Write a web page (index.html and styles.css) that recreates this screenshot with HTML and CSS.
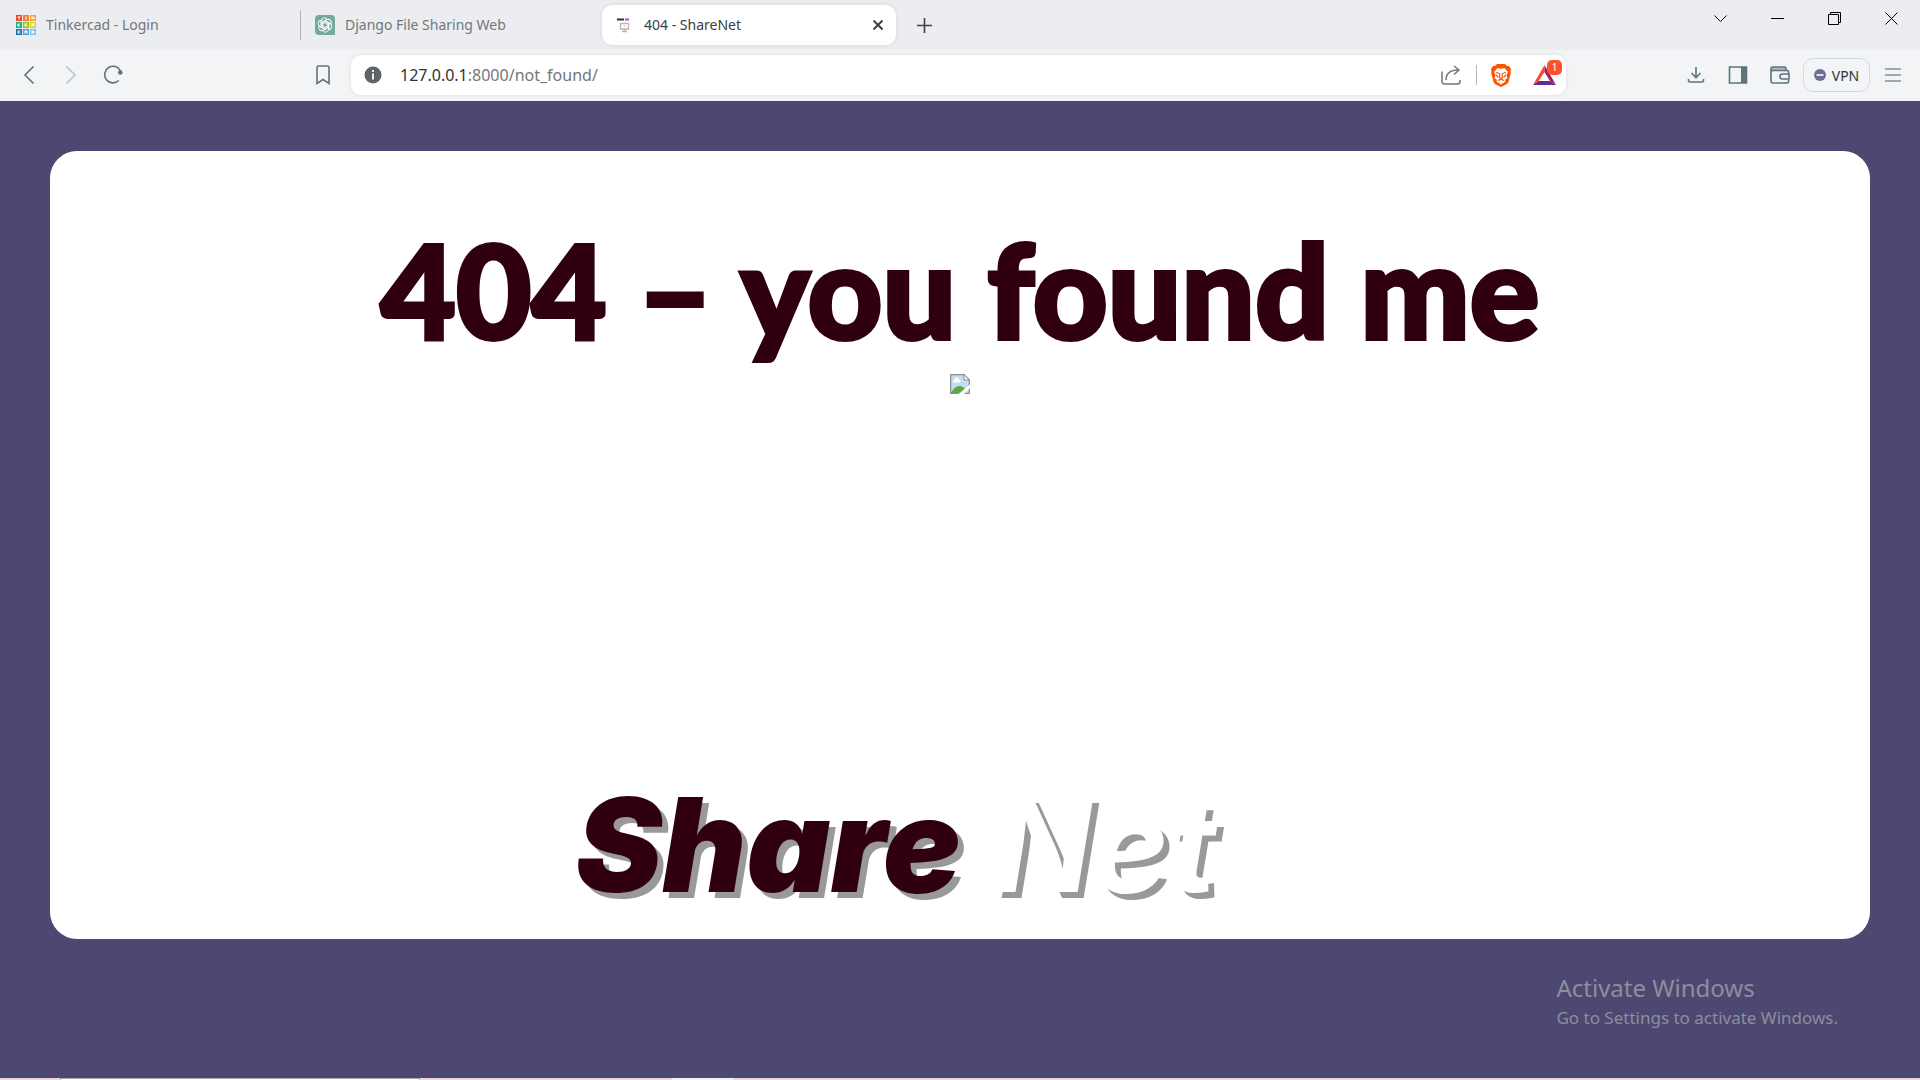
FILE: index.html
```html
<!DOCTYPE html>
<html lang="en">
<head>
<meta charset="utf-8">
<title>404 - ShareNet</title>
<link rel="stylesheet" href="styles.css">
</head>
<body>
<div class="browser">
  <header class="tabstrip">
    <nav class="tabs" aria-label="Tabs">
      <button class="tab divided">
        <svg class="favicon" viewBox="0 0 20 20" width="20" height="20" aria-hidden="true">
          <path fill="#f0452b" d="M0 0h6v6H0z"/><path fill="#f57b3a" d="M7 0h6v6H7z"/><path fill="#f9a13a" d="M14 0h6v6h-6z"/>
          <path fill="#1fb07a" d="M0 7h6v6H0z"/><path fill="#8cc90e" d="M7 7h6v6H7z"/><path fill="#e0d32c" d="M14 7h6v6h-6z"/>
          <path fill="#0b6fb8" d="M0 14h6v6H0z"/><path fill="#4aa0dc" d="M7 14h6v6H7z"/><path fill="#7cc3e6" d="M14 14h6v6h-6z"/>
          <g fill="#fff"><path d="M1.500 1.500h3v1h-1v2h-1v-2h-1zM9.500 1.500h1v3h-1zM15.500 1.500h1l1 1.500V1.500h1v3h-1l-1-1.500v1.500h-1zM1.500 8.500h1v1l1-1h1L3 10l1.500 1.500h-1l-1-1v1h-1zM8.500 8.500h3v1h-2v1h2v1h-3zM15.500 8.500h3v2l-.5.3.5.7h-1l-1-1v1h-1zM1.500 15.500h3v1h-2v1h2v1h-3zM8.500 15.500h3v3h-1v-1h-1v1h-1zM15.500 15.500h2l1 1v1l-1 1h-2z"/></g>
        </svg>
        <span>Tinkercad - Login</span>
      </button>
      <button class="tab">
        <svg class="favicon" viewBox="0 0 20 20" width="20" height="20" aria-hidden="true">
          <path fill="#74aa9c" d="M4 0h12a4 4 0 0 1 4 4v16H4a4 4 0 0 1-4-4V4a4 4 0 0 1 4-4z"/>
          <g fill="none" stroke="#fff" stroke-width=".9">
            <path id="petal" d="M6.300 12V6.200a3.200 3.200 0 0 1 5.800-2L7.800 6.700v4.800"/>
            <use href="#petal" transform="rotate(60 10 10)"/><use href="#petal" transform="rotate(120 10 10)"/>
            <use href="#petal" transform="rotate(180 10 10)"/><use href="#petal" transform="rotate(240 10 10)"/>
            <use href="#petal" transform="rotate(300 10 10)"/>
          </g>
        </svg>
        <span>Django File Sharing Web</span>
      </button>
      <div class="tab active">
        <svg class="favicon" viewBox="0 0 20 20" width="20" height="20" aria-hidden="true">
          <path fill="#33283c" d="M3 3.500h7v2H3z"/><path fill="#8a5bea" d="M11 3.500h4v2h-4z"/>
          <path fill="none" stroke="#c4b2ab" stroke-width="1.300" d="M6.500 8.500h8v5.500h-8zM10.500 14v2M8 16.500h5"/><path stroke="#c4b2ab" d="M9.500 11h2"/>
        </svg>
        <span class="tab-title">404 - ShareNet</span>
        <button class="tab-close" aria-label="Close tab">
          <svg viewBox="0 0 10 10" width="10" height="10"><path stroke="#3c4043" stroke-width="2" d="M.5.5l9 9M9.500.5l-9 9"/></svg>
        </button>
      </div>
      <button class="new-tab" aria-label="New tab">
        <svg viewBox="0 0 15 15" width="15" height="15"><path stroke="#3c4043" stroke-width="1.600" d="M0 7.500h15M7.500 0v15"/></svg>
      </button>
    </nav>
    <div class="window-controls">
      <button aria-label="Search tabs"><svg viewBox="0 0 13 13" width="13" height="13"><path d="M.5 3.500l6 6 6-6"/></svg></button>
      <button aria-label="Minimize"><svg viewBox="0 0 13 13" width="13" height="13"><path d="M0 6.500h13"/></svg></button>
      <button aria-label="Restore"><svg viewBox="0 0 13 13" width="13" height="13"><path d="M.5 2.500h10v10H.5zM2.500 2.500v-2h10v10h-2"/></svg></button>
      <button aria-label="Close"><svg viewBox="0 0 13 13" width="13" height="13"><path d="M.5.5l12 12M12.500.5l-12 12"/></svg></button>
    </div>
  </header>

  <div class="toolbar">
    <div class="nav-buttons">
      <button aria-label="Back"><svg viewBox="0 0 20 20" width="20" height="20"><path stroke="#5f737d" d="M14.500 1.500L6 10l8.500 8.500"/></svg></button>
      <button aria-label="Forward"><svg viewBox="0 0 20 20" width="20" height="20"><path stroke="#b9c3ca" d="M5.500 1.500L14 10l-8.500 8.500"/></svg></button>
      <button aria-label="Reload"><svg viewBox="0 0 20 20" width="20" height="20"><path stroke="#5f737d" d="M15.800 15.500A8.300 8.300 0 1 1 17.500 6"/><circle cx="17.300" cy="7.500" r="2.300" fill="#5f737d"/></svg></button>
    </div>
    <button class="bookmark" aria-label="Bookmark this page"><svg viewBox="0 0 16 20" width="16" height="20"><path stroke="#5f737d" d="M3.500 1h9A1.500 1.500 0 0 1 14 2.500V18.500l-6-4-6 4V2.500A1.500 1.500 0 0 1 3.500 1z"/></svg></button>
    <div class="address-bar">
      <svg viewBox="0 0 18 18" width="18" height="18" aria-hidden="true"><circle cx="9" cy="9" r="8.500" fill="#5f6368"/><path stroke="#fff" stroke-width="1.800" d="M9 4v2M9 7.500v6"/></svg>
      <a class="url" href="#"><span class="host">127.0.0.1</span>:8000/not_found/</a>
      <button class="share" aria-label="Share"><svg viewBox="0 0 20 20" width="20" height="20"><path fill="none" stroke="#70767a" stroke-width="1.500" d="M1 6.500v10A2.500 2.500 0 0 0 3.500 19h13a2.500 2.500 0 0 0 2.500-2.500V15M5 15c0-6 4-10 12.500-10M13 1l5 4-5 4.500"/></svg></button>
      <span class="bar-divider"></span>
      <button aria-label="Brave Shields"><svg viewBox="0 0 20 23" width="20" height="23"><path fill="#ff5200" d="M6 0h8l2 2h2l2 3-.5 2 .3 2-2.300 9-1.500 2-6 3-6-3-1.500-2L.2 9l.3-2L0 5l2-3h2z"/><path fill="#fff" d="M6.500 4L10 4.700 13.500 4l3.500 4-1.500 3 1 3-2.500 2 .5 1.500L10 20.500l-4.500-3L6 16l-2.500-2 1-3L3 8z"/><path fill="none" stroke="#ff5200" stroke-width="1.200" d="M5 8.500l3.500 1M15 8.500l-3.500 1M9 9.500l-.7 4 1.700.8 1.700-.8-.7-4M7 13l-2-2M13 13l2-2M7 16.500l3-1.300 3 1.300"/></svg></button>
      <button class="rewards" aria-label="Brave Rewards"><svg viewBox="0 0 23 20" width="23" height="20"><path fill="#ff4724" d="M11.500 0v7L5.500 16 0 20z"/><path fill="#9e1f63" d="M11.500 0L23 20l-6-4-5.500-9z"/><path fill="#662d91" d="M5.500 16H17l6 4H0z"/></svg><span class="badge">1</span></button>
    </div>
    <div class="actions">
      <button aria-label="Downloads"><svg viewBox="0 0 20 20" width="20" height="20"><path stroke="#5f737d" d="M10 2v10M5.500 8L10 12.500 14.500 8M2.500 14v1.500A1.500 1.500 0 0 0 4 17h12a1.500 1.500 0 0 0 1.500-1.500V14"/></svg></button>
      <button aria-label="Sidebar"><svg viewBox="0 0 20 20" width="20" height="20"><path stroke="#5f737d" d="M1.500 2h17v16h-17z"/><path class="solid" d="M13 2h6v16h-6z"/></svg></button>
      <button aria-label="Wallet"><svg viewBox="0 0 20 20" width="20" height="20"><path class="pale" d="M2 2h13l2 4H2z"/><path stroke="#5f737d" d="M18.500 8.500V7A1.500 1.500 0 0 0 17 5.500H3A1.500 1.500 0 0 1 1 4a2 2 0 0 1 2-2h11.500A1.500 1.500 0 0 1 16 3.500v2M1 4v12a2 2 0 0 0 2 2h14a1.500 1.500 0 0 0 1.500-1.500V15M19 9h-6.500a2.500 2.500 0 0 0 0 5H19z"/></svg></button>
      <button class="vpn"><svg viewBox="0 0 12 12" width="12" height="12" aria-hidden="true"><circle cx="6" cy="6" r="6" fill="#6b7092"/><path stroke="#fff" stroke-width="1.600" d="M2.500 6h7"/></svg>VPN</button>
      <button aria-label="Menu"><svg viewBox="0 0 20 20" width="20" height="20"><path stroke="#7f9099" d="M2 4h16M2 10h16M2 16h16"/></svg></button>
    </div>
  </div>

  <main class="page">
    <section class="card">
      <h1 class="headline">404 – you found me</h1>
      <svg class="broken" viewBox="0 0 20 20" width="20" height="20" role="img" aria-label="Missing picture">
        <path fill="#c8d9f5" d="M.5.5H14l5.500 5.500v13.500H.5z"/>
        <path fill="#fff" d="M4 6.500a2.500 2.500 0 0 1 5-1 1.700 1.700 0 0 1 1 3H3.500a1 1 0 0 1 .5-2z"/>
        <path fill="#57ad3b" d="M1 19c2-4 5-7 8.500-7 3 0 5 2 6 3.500l-3 3.500z"/>
        <path fill="none" stroke="#8d8d8d" stroke-width="1.300" d="M19.400 19.400H.6V.6H14l5.400 5.400z"/>
        <path fill="#fff" stroke="#8d8d8d" d="M14 .6V6h5.400z"/>
        <path fill="#fff" d="M20 10.500V14l-6 6H8.500z"/>
      </svg>
      <p class="brand"><span class="brand-share">Share</span><span class="brand-net">Net</span></p>
    </section>
  </main>

  <footer class="taskbar"><span class="task-search"></span><span class="task-current"></span></footer>

  <aside class="watermark">
    <p class="watermark-title">Activate Windows</p>
    <p class="watermark-text">Go to Settings to activate Windows.</p>
  </aside>
</div>
</body>
</html>
```
FILE: styles.css
```css
* { box-sizing: border-box; }

body {
  margin: 0;
  font-family: "Noto Sans", "Open Sans", sans-serif;
}

p, h1 { margin: 0; }

button {
  display: flex;
  align-items: center;
  justify-content: center;
  padding: 0;
  border: 0;
  background: none;
  font: inherit;
  color: inherit;
}

svg { display: block; flex: none; }

.browser {
  display: flex;
  flex-direction: column;
  min-height: 100vh;
}

/* Tab strip */
.tabstrip {
  display: flex;
  justify-content: space-between;
  height: 50px;
  background: #ebedf1;
}

.tabs { display: flex; align-items: center; }

.tab {
  display: flex;
  align-items: center;
  justify-content: flex-start;
  gap: 10px;
  width: 301px;
  height: 30px;
  padding: 0 14px 0 16px;
  font-size: 14px;
  line-height: 20px;
  color: #73777b;
}

.tab.divided { border-right: 1px solid #b4b6b9; }

.tab:nth-child(2) { padding-left: 14px; }

.tab.active {
  width: 294px;
  height: 40px;
  padding: 0 12px;
  border-radius: 10px;
  background: #fff;
  box-shadow: 0 0 4px #0000001a;
  color: #3c4043;
}

.tab-title { flex: 1; }

.tab-close { width: 12px; height: 20px; }

.new-tab { width: 32px; height: 32px; margin-left: 12px; }

.window-controls { display: flex; height: 37px; }

.window-controls button { width: 57px; }

.window-controls path { fill: none; stroke: #000; }

/* Toolbar */
.toolbar {
  display: flex;
  align-items: center;
  height: 51px;
  padding-bottom: 1px;
  background: #f3f4f6;
}

.nav-buttons { display: flex; gap: 22px; padding-left: 19px; }

.nav-buttons path, .bookmark path, .actions path { fill: none; stroke-width: 1.600; }

.actions .solid { fill: #5f737d; }

.actions .pale { fill: #aebac1; }

.bookmark { margin-left: 192px; }

.address-bar {
  display: flex;
  flex: 1;
  align-items: center;
  height: 40px;
  margin-left: 20px;
  padding: 0 10px 0 13px;
  border-radius: 10px;
  background: #fff;
  box-shadow: 0 0 4px #0000001a;
}

.url {
  flex: 1;
  margin-left: 18px;
  font-size: 16px;
  line-height: 24px;
  color: #72777b;
  text-decoration: none;
}

.host { color: #2f3336; }

.bar-divider {
  width: 1px;
  height: 20px;
  margin: 0 14px 0 15px;
  background: #b4b8bb;
}

.rewards { position: relative; margin-left: 22px; }

.badge {
  position: absolute;
  top: -5px;
  right: -6px;
  width: 15px;
  height: 15px;
  border-radius: 5px;
  background: #fb542b;
  color: #fff;
  font-size: 10px;
  line-height: 15px;
}

.actions {
  display: flex;
  align-items: center;
  gap: 22px;
  padding: 0 17px 0 120px;
}

.vpn {
  gap: 6px;
  width: 67px;
  height: 34px;
  margin: 0 -9px;
  border: 1px solid #d1d9e0;
  border-radius: 10px;
  font-size: 14px;
  color: #2f3336;
}

/* Page */
.page {
  display: flex;
  flex: 1;
  flex-direction: column;
  padding: 50px 50px 139px;
  background: #4c4872;
}

.card {
  display: flex;
  flex: 1;
  flex-direction: column;
  align-items: center;
  padding: 63px 24px 30px;
  border-radius: 27px;
  background: #fff;
  color: #300010;
}

.headline {
  margin-bottom: 10px;
  font: 900 130px/150px Lato, sans-serif;
  white-space: nowrap;
  -webkit-text-stroke: 4px #300010;
}

.brand {
  display: flex;
  align-items: baseline;
  gap: 32px;
  margin: auto 128px 0 0;
  font-family: Inter, sans-serif;
  font-size: 130px;
  line-height: 128px;
  font-style: italic;
  text-shadow: 6px 6px 0 #999;
}

.brand-share { font-weight: 900; }

.brand-net { font-weight: 700; color: #fff; }

/* Desktop edge */
.taskbar {
  display: flex;
  height: 2px;
  padding-left: 60px;
  background: #ead7dd;
}

.task-search { width: 360px; border: 1px solid #aaa; border-bottom: 0; background: #fff; }

.task-current { width: 61px; margin-left: 252px; background: #f3f0f4; }

.watermark {
  position: absolute;
  right: 82px;
  bottom: 49px;
  color: #8f8d9a;
}

.watermark-title { font-size: 24px; line-height: 32px; }

.watermark-text { font-size: 17px; line-height: 27px; }
```
